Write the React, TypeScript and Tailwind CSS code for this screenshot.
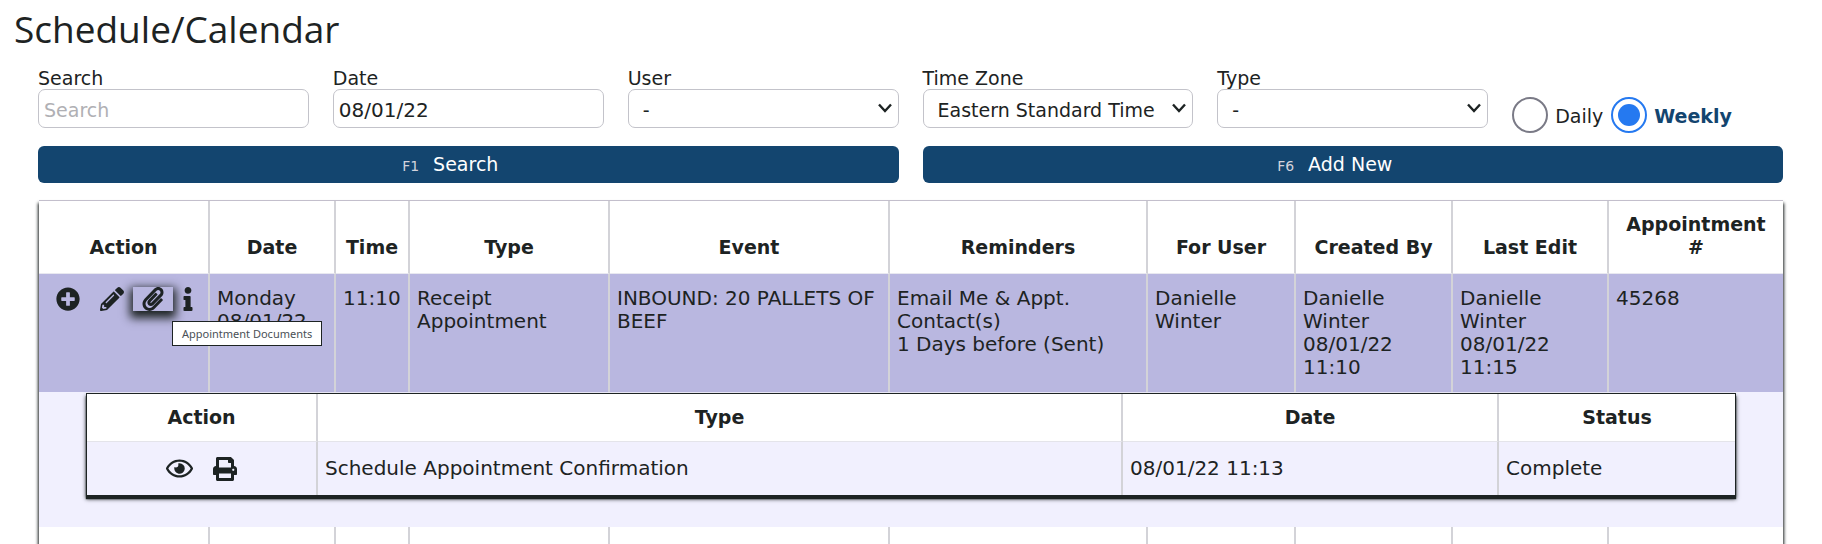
import { FaInfo, FaPaperclip, FaPencilAlt, FaPlusCircle, FaPrint, FaRegEye } from 'react-icons/fa';

interface Column {
  label: string;
  width: string;
}

interface SelectFieldProps {
  id: string;
  label: string;
  option: string;
}

const columns: Column[] = [
  { label: 'Action', width: 'w-[171px]' },
  { label: 'Date', width: 'w-[126px]' },
  { label: 'Time', width: 'w-[74px]' },
  { label: 'Type', width: 'w-[200px]' },
  { label: 'Event', width: 'w-[280px]' },
  { label: 'Reminders', width: 'w-[258px]' },
  { label: 'For User', width: 'w-[148px]' },
  { label: 'Created By', width: 'w-[157px]' },
  { label: 'Last Edit', width: 'w-[156px]' },
  { label: 'Appointment #', width: 'w-[174px]' },
];

const documentColumns: Column[] = [
  { label: 'Action', width: 'w-[231px]' },
  { label: 'Type', width: 'w-[805px]' },
  { label: 'Date', width: 'w-[376px]' },
  { label: 'Status', width: 'w-[236px]' },
];

const labelClass = 'block pt-[2px] leading-[21px]';
const fieldClass = 'h-[39px] w-full rounded-[7px] border border-[#c3c3ca] bg-white outline-none';

function SelectField({ id, label, option }: SelectFieldProps) {
  return (
    <div>
      <label htmlFor={id} className={labelClass}>{label}</label>
      <div className="relative">
        <select id={id} className={`${fieldClass} appearance-none pt-1 pr-9 pl-[14px]`}>
          <option>{option}</option>
        </select>
        <svg
          viewBox="0 0 14 10"
          className="pointer-events-none absolute top-[14px] right-[7px] h-[10px] w-[14px]"
          fill="none"
          stroke="#1d2323"
          strokeWidth="2.4"
        >
          <path d="M1 1.5l6 6.5 6-6.5" />
        </svg>
      </div>
    </div>
  );
}

export default function App() {
  return (
    <main className="bg-white font-['DejaVu_Sans',Verdana,sans-serif] text-[19px] leading-[23px] text-[#1d2323]">
      <h1 className="px-[14px] pt-1 font-['Open_Sans',sans-serif] text-[37px] leading-[50px]">
        Schedule/Calendar
      </h1>

      <div className="pt-3 pr-[39px] pl-[38px]">
        {/* Filters */}
        <form className="grid grid-cols-6 gap-x-6">
          <div>
            <label htmlFor="search" className={labelClass}>Search</label>
            <input
              id="search"
              type="text"
              placeholder="Search"
              className={`${fieldClass} px-[5px] pt-[2px] placeholder:text-[#b0b0b4]`}
            />
          </div>
          <div>
            <label htmlFor="date" className={labelClass}>Date</label>
            <input
              id="date"
              type="text"
              defaultValue="08/01/22"
              className={`${fieldClass} px-[5px] pt-[2px] text-[20px]`}
            />
          </div>
          <SelectField id="user" label="User" option="-" />
          <SelectField id="zone" label="Time Zone" option="Eastern Standard Time" />
          <SelectField id="type" label="Type" option="-" />
          <div className="flex items-end gap-2">
            <label className="flex items-center gap-[7px]">
              <input
                type="radio"
                name="range"
                className="-mb-[5px] size-9 appearance-none rounded-full border-2 border-[#7a7a86]"
              />
              <span className="pt-2">Daily</span>
            </label>
            <label className="flex items-center gap-[7px] font-bold text-[#13456f]">
              <input
                type="radio"
                name="range"
                defaultChecked
                className="-mb-[5px] size-9 appearance-none rounded-full border-2 border-[#2579f0] bg-[#2579f0] bg-clip-content p-[5px]"
              />
              <span className="pt-2">Weekly</span>
            </label>
          </div>
        </form>

        <div className="mt-[18px] grid grid-cols-2 gap-6">
          <button type="button" className="h-[37px] rounded-[6px] bg-[#13456f] pt-[2px] pr-9 text-white">
            <span className="mr-[14px] text-[14px] text-[#d3d3dc]">F1</span>
            Search
          </button>
          <button type="button" className="h-[37px] rounded-[6px] bg-[#13456f] pt-[2px] pr-9 text-white">
            <span className="mr-[14px] text-[14px] text-[#d3d3dc]">F6</span>
            Add New
          </button>
        </div>
      </div>

      {/* Appointments */}
      <div className="px-[39px] pt-[17px]">
        <table className="w-full table-fixed border-separate border-spacing-0 border-t border-[#c3bfcc] shadow-[0_4px_3px_1px_#1d2323]">
          <thead>
            <tr>
              {columns.map((col) => (
                <th
                  key={col.label}
                  scope="col"
                  className={`${col.width} h-[73px] border-r-2 border-b border-r-[#d3d3d8] border-b-[#e8e8f0] bg-white px-2 pb-[14px] align-bottom font-bold last:border-r-0`}
                >
                  {col.label}
                </th>
              ))}
            </tr>
          </thead>
          <tbody>
            <tr className="bg-[#b9b7e0] align-top text-[20px] *:h-[118px] *:border-r-2 *:border-[#d3d3d8] *:px-[7px] *:pt-[13px] *:last:border-r-0">
              <td>
                <div className="flex items-start pl-[10px]">
                  <button type="button" aria-label="Add" className="h-6"><FaPlusCircle size={24} /></button>
                  <button type="button" aria-label="Edit" className="ml-5 h-6"><FaPencilAlt size={24} /></button>
                  <div className="relative ml-[9px]">
                    <button
                      type="button"
                      aria-label="Appointment Documents"
                      className="flex h-6 w-10 items-center justify-center bg-[#b9b7e0] shadow-[0_4px_9px_3px_#1d2323]"
                    >
                      <FaPaperclip size={24} />
                    </button>
                    <div
                      role="tooltip"
                      className="absolute top-[34px] left-[39px] z-10 border border-[#1d2323] bg-white px-[9px] font-['Noto_Sans',sans-serif] text-[11px] leading-[23px] whitespace-nowrap text-[#4a5056]"
                    >
                      Appointment Documents
                    </div>
                  </div>
                  <button type="button" aria-label="Info" className="ml-[3px] h-6"><FaInfo size={24} /></button>
                </div>
              </td>
              <td>Monday 08/01/22</td>
              <td>11:10</td>
              <td>Receipt Appointment</td>
              <td>INBOUND: 20 PALLETS OF BEEF</td>
              <td>Email Me &amp; Appt. Contact(s)<br />1 Days before (Sent)</td>
              <td>Danielle Winter</td>
              <td>Danielle Winter 08/01/22 11:10</td>
              <td>Danielle Winter 08/01/22 11:15</td>
              <td>45268</td>
            </tr>
            <tr className="bg-[#f1f0fe]">
              <td colSpan={10} className="px-12 pt-[2px] pb-8">
                <table className="w-full table-fixed border-separate border-spacing-0 bg-white shadow-[0_0_0_1px_#1d2323,0_3px_1px_1px_#1d2323,0_3px_4px_1px_#1d2323]">
                  <thead>
                    <tr>
                      {documentColumns.map((col) => (
                        <th
                          key={col.label}
                          scope="col"
                          className={`${col.width} h-12 border-r-2 border-b border-r-[#d3d3d8] border-b-[#e4e4ea] font-bold last:border-r-0`}
                        >
                          {col.label}
                        </th>
                      ))}
                    </tr>
                  </thead>
                  <tbody>
                    <tr className="bg-[#f1f0fe] text-[20px] *:h-[53px] *:border-r-2 *:border-[#d3d3d8] *:px-[7px] *:last:border-r-0">
                      <td>
                        <div className="flex items-center justify-center gap-5">
                          <button type="button" aria-label="View"><FaRegEye size={27} /></button>
                          <button type="button" aria-label="Print"><FaPrint size={24} /></button>
                        </div>
                      </td>
                      <td>Schedule Appointment Confirmation</td>
                      <td>08/01/22 11:13</td>
                      <td>Complete</td>
                    </tr>
                  </tbody>
                </table>
              </td>
            </tr>
            <tr className="bg-white *:h-[17px] *:border-r-2 *:border-[#d3d3d8] *:last:border-r-0">
              {columns.map((col) => (
                <td key={col.label} />
              ))}
            </tr>
          </tbody>
        </table>
      </div>
    </main>
  );
}
